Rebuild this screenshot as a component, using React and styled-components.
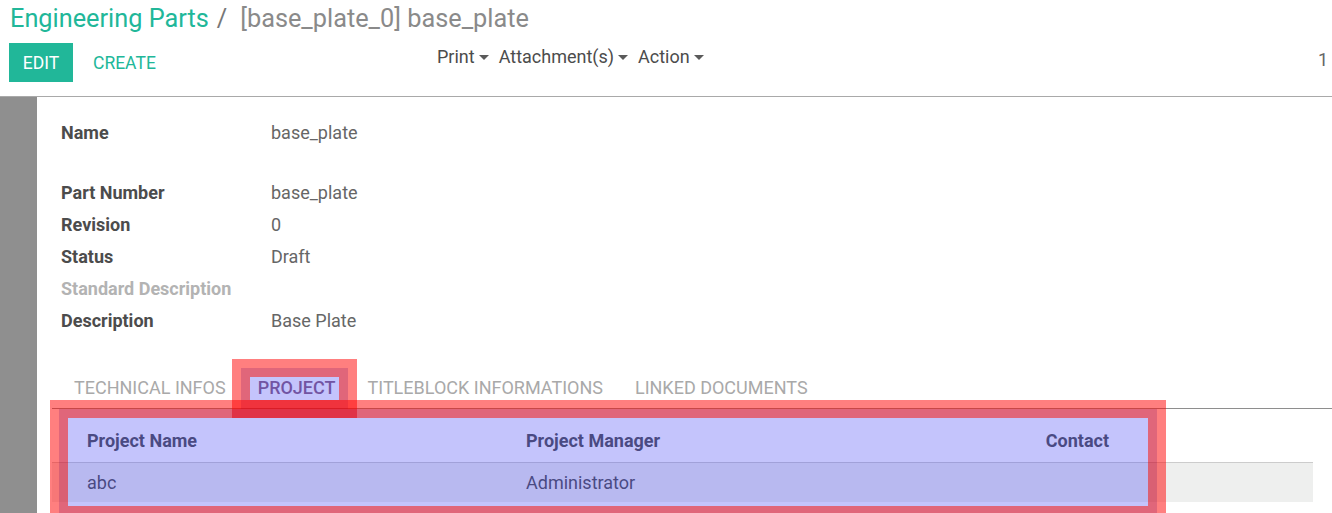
import styled, { createGlobalStyle } from "styled-components";

const GlobalStyle = createGlobalStyle`
  html, body {
    margin: 0;
    padding: 0;
    background: #ffffff;
    font-family: Roboto, "Noto Sans", "Liberation Sans", sans-serif;
    overflow: hidden;
  }
`;

const Page = styled.div`
  position: relative;
  width: 1332px;
  height: 513px;
  overflow: hidden;
  background: #ffffff;
`;

const ControlPanel = styled.div`
  height: 96px;
  border-bottom: 1px solid #a9a9a9;
  box-sizing: content-box;
`;

const Breadcrumb = styled.div`
  height: 37px;
  line-height: 37px;
  padding-left: 10px;
  font-size: 25.3px;
  white-space: nowrap;
`;

const Crumb = styled.span`
  color: #21b799;
`;

const Separator = styled.span`
  color: #777777;
  padding: 0 13px 0 8px;
`;

const Current = styled.span`
  color: #8a8a8a;
`;

const ButtonRow = styled.div`
  display: flex;
  align-items: flex-start;
  margin-top: 6px;
`;

const MainButtons = styled.div`
  display: flex;
  align-items: center;
  width: 428px;
  padding-left: 9px;
`;

const PrimaryButton = styled.button`
  width: 64px;
  height: 39px;
  border: none;
  background: #21b799;
  color: #ffffff;
  font-family: inherit;
  font-size: 17.5px;
  padding: 0;
`;

const LinkButton = styled.button`
  border: none;
  background: transparent;
  color: #21b799;
  font-family: inherit;
  font-size: 17.5px;
  margin-left: 20px;
  padding: 0;
  height: 39px;
`;

const Sidebar = styled.div`
  display: flex;
  gap: 10px;
  line-height: 28px;
`;

const Dropdown = styled.span`
  display: flex;
  align-items: center;
  color: #4c4c4c;
  font-size: 18px;
`;

const Caret = styled.span`
  display: inline-block;
  width: 0;
  height: 0;
  margin-left: 4px;
  border-top: 5px solid #5a5a5a;
  border-left: 5px solid transparent;
  border-right: 5px solid transparent;
`;

const Pager = styled.div`
  margin-left: auto;
  padding-right: 4px;
  margin-top: 3px;
  line-height: 28px;
  font-size: 18px;
  color: #666666;
`;

const Body = styled.div`
  display: flex;
  height: 416px;
`;

const Gutter = styled.div`
  width: 37px;
  background: #8f8f8f;
  flex-shrink: 0;
`;

const Sheet = styled.div`
  flex: 1;
  padding-top: 20px;
`;

const Fields = styled.div`
  padding-left: 24px;
`;

const FieldRow = styled.div`
  display: flex;
  height: 32px;
  line-height: 32px;
  font-size: 18px;
  margin-bottom: ${(p) => (p.$gap ? "28px" : "0")};
`;

const Label = styled.div`
  width: 210px;
  font-weight: 700;
  color: ${(p) => (p.$muted ? "#b3b3b3" : "#4c4c4c")};
`;

const Value = styled.div`
  color: #666666;
`;

const TabBar = styled.div`
  display: flex;
  margin-top: 31px;
  margin-left: 15px;
  padding-left: 6px;
  border-bottom: 1px solid #8e8e8e;
`;

const Tab = styled.div`
  height: 40px;
  line-height: 40px;
  padding: 0 16px;
  font-size: 18px;
  text-transform: uppercase;
  color: ${(p) => (p.$active ? "#875a7b" : "#a9a9a9")};
  font-weight: ${(p) => (p.$active ? 500 : 400)};
`;

const ListTable = styled.div`
  margin: 10px 19px 0 15px;
  font-size: 18px;
  color: #4c4c4c;
`;

const ListRow = styled.div`
  display: grid;
  grid-template-columns: 474px 460px 123px 1fr;
  height: ${(p) => (p.$head ? "43px" : "39px")};
  line-height: ${(p) => (p.$head ? "43px" : "39px")};
  font-weight: ${(p) => (p.$head ? 700 : 400)};
  background: ${(p) => (p.$head ? "transparent" : "#eeefee")};
  border-bottom: ${(p) => (p.$head ? "1px solid #cccccc" : "none")};
`;

const Cell = styled.div`
  padding-left: ${(p) => (p.$first ? "35px" : "0")};
  text-align: ${(p) => (p.$right ? "right" : "left")};
  white-space: nowrap;
`;

const Ring = styled.div`
  position: absolute;
  box-sizing: border-box;
  border: 9px solid ${(p) => p.$color};
  pointer-events: none;
`;

const Fill = styled.div`
  position: absolute;
  background: rgba(70, 70, 245, 0.32);
  pointer-events: none;
`;

const Highlight = ({ x, y, w, h }) => (
  <>
    <Ring $color="rgba(255, 0, 0, 0.5)" style={{ left: x, top: y, width: w, height: h }} />
    <Ring
      $color="rgba(203, 0, 33, 0.6)"
      style={{ left: x + 9, top: y + 9, width: w - 18, height: h - 18 }}
    />
    <Fill style={{ left: x + 18, top: y + 18, width: w - 36, height: h - 36 }} />
  </>
);

const fields = [
  { label: "Name", value: "base_plate", gap: true },
  { label: "Part Number", value: "base_plate" },
  { label: "Revision", value: "0" },
  { label: "Status", value: "Draft" },
  { label: "Standard Description", value: "", muted: true },
  { label: "Description", value: "Base Plate" },
];

const tabs = ["Technical Infos", "Project", "Titleblock Informations", "Linked Documents"];

export default function App() {
  return (
    <Page>
      <GlobalStyle />
      <ControlPanel>
        <Breadcrumb>
          <Crumb>Engineering Parts</Crumb>
          <Separator>/</Separator>
          <Current>[base_plate_0] base_plate</Current>
        </Breadcrumb>
        <ButtonRow>
          <MainButtons>
            <PrimaryButton>EDIT</PrimaryButton>
            <LinkButton>CREATE</LinkButton>
          </MainButtons>
          <Sidebar>
            <Dropdown>Print<Caret /></Dropdown>
            <Dropdown>Attachment(s)<Caret /></Dropdown>
            <Dropdown>Action<Caret /></Dropdown>
          </Sidebar>
          <Pager>1</Pager>
        </ButtonRow>
      </ControlPanel>
      <Body>
        <Gutter />
        <Sheet>
          <Fields>
            {fields.map((f) => (
              <FieldRow key={f.label} $gap={f.gap}>
                <Label $muted={f.muted}>{f.label}</Label>
                <Value>{f.value}</Value>
              </FieldRow>
            ))}
          </Fields>
          <TabBar>
            {tabs.map((t) => (
              <Tab key={t} $active={t === "Project"}>{t}</Tab>
            ))}
          </TabBar>
          <ListTable>
            <ListRow $head>
              <Cell $first>Project Name</Cell>
              <Cell>Project Manager</Cell>
              <Cell $right>Contact</Cell>
              <Cell />
            </ListRow>
            <ListRow>
              <Cell $first>abc</Cell>
              <Cell>Administrator</Cell>
              <Cell $right></Cell>
              <Cell />
            </ListRow>
          </ListTable>
        </Sheet>
      </Body>
      <Highlight x={232} y={359} w={125} h={59} />
      <Highlight x={50} y={400} w={1116} h={124} />
    </Page>
  );
}
